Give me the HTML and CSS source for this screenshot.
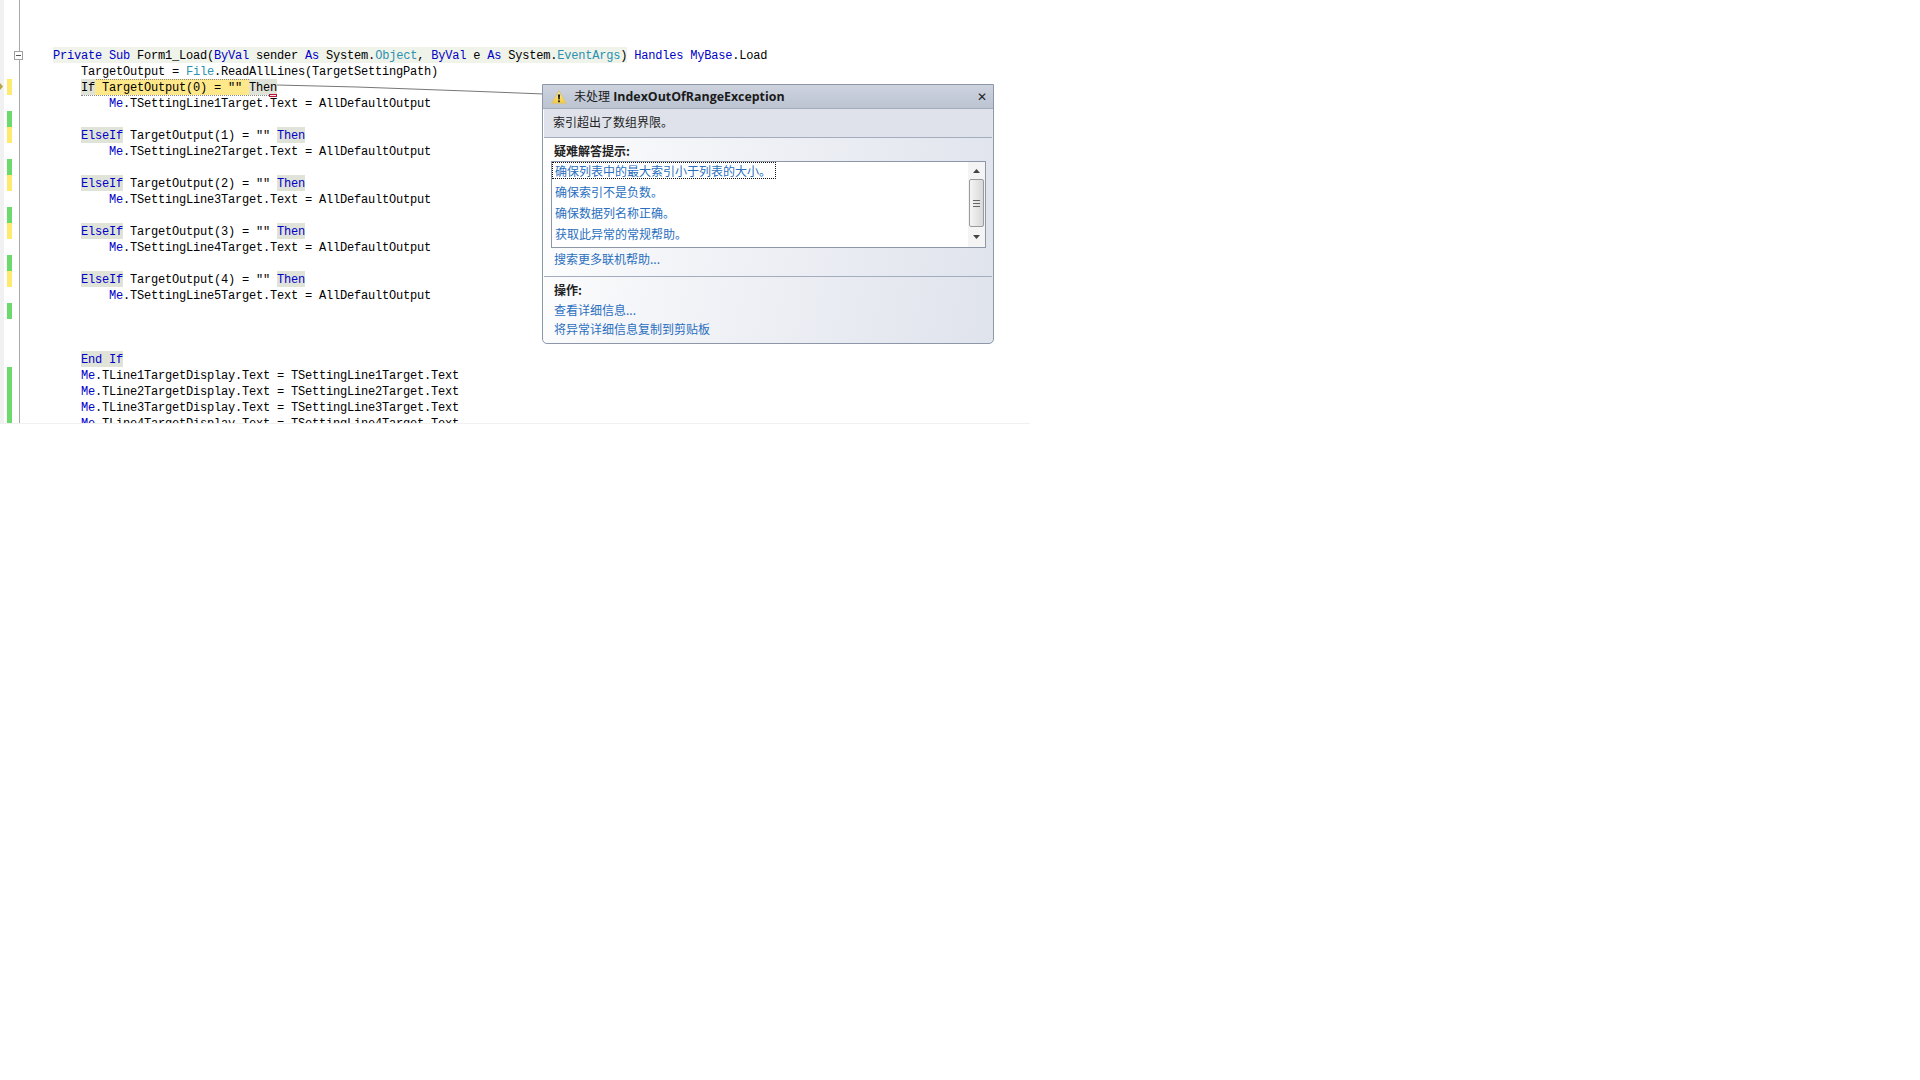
FILE: index.html
```html
<!DOCTYPE html>
<html lang="zh-CN">
<head>
<meta charset="utf-8">
<title>IndexOutOfRangeException</title>
<link rel="stylesheet" href="styles.css">
</head>
<body>
<main class="editor">
  <button class="fold" aria-label="折叠"></button>
  <svg class="exec-arrow" width="3" height="7" viewBox="0 0 3 7"><path d="M0 0 L3 3.5 L0 7 Z" fill="#b5a642"/></svg>
  <svg class="leader" width="300" height="20" viewBox="0 0 300 20"><polyline points="0,1 80,3 190,7 267,10" fill="none" stroke="#777" stroke-width="1"/></svg>
  <div class="line"><i class="mark"></i><code class="code in0"><span class="ref"><b>Private</b> <b>Sub</b> Form1_Load(<b>ByVal</b> sender <b>As</b> System.<em>Object</em>, <b>ByVal</b> e <b>As</b> System.<em>EventArgs</em>)</span> <b>Handles</b> <b>MyBase</b>.Load</code></div>
  <div class="line"><i class="mark"></i><code class="code in1">TargetOutput = <em>File</em>.ReadAllLines(TargetSettingPath)</code></div>
  <div class="line"><i class="mark yellow"></i><code class="code in1 current"><span class="kw-bg">If</span><span class="stmt"> TargetOutput(0) = "" </span><span class="kw-bg">Then<s class="squiggle"></s></span></code></div>
  <div class="line"><i class="mark"></i><code class="code in2"><b>Me</b>.TSettingLine1Target.Text = AllDefaultOutput</code></div>
  <div class="line"><i class="mark green"></i><code class="code"></code></div>
  <div class="line"><i class="mark yellow"></i><code class="code in1"><span class="kw-bg"><b>ElseIf</b></span> TargetOutput(1) = "" <span class="kw-bg"><b>Then</b></span></code></div>
  <div class="line"><i class="mark"></i><code class="code in2"><b>Me</b>.TSettingLine2Target.Text = AllDefaultOutput</code></div>
  <div class="line"><i class="mark green"></i><code class="code"></code></div>
  <div class="line"><i class="mark yellow"></i><code class="code in1"><span class="kw-bg"><b>ElseIf</b></span> TargetOutput(2) = "" <span class="kw-bg"><b>Then</b></span></code></div>
  <div class="line"><i class="mark"></i><code class="code in2"><b>Me</b>.TSettingLine3Target.Text = AllDefaultOutput</code></div>
  <div class="line"><i class="mark green"></i><code class="code"></code></div>
  <div class="line"><i class="mark yellow"></i><code class="code in1"><span class="kw-bg"><b>ElseIf</b></span> TargetOutput(3) = "" <span class="kw-bg"><b>Then</b></span></code></div>
  <div class="line"><i class="mark"></i><code class="code in2"><b>Me</b>.TSettingLine4Target.Text = AllDefaultOutput</code></div>
  <div class="line"><i class="mark green"></i><code class="code"></code></div>
  <div class="line"><i class="mark yellow"></i><code class="code in1"><span class="kw-bg"><b>ElseIf</b></span> TargetOutput(4) = "" <span class="kw-bg"><b>Then</b></span></code></div>
  <div class="line"><i class="mark"></i><code class="code in2"><b>Me</b>.TSettingLine5Target.Text = AllDefaultOutput</code></div>
  <div class="line"><i class="mark green"></i><code class="code"></code></div>
  <div class="line"><i class="mark"></i><code class="code"></code></div>
  <div class="line"><i class="mark"></i><code class="code"></code></div>
  <div class="line"><i class="mark"></i><code class="code in1"><span class="kw-bg"><b>End</b> <b>If</b></span></code></div>
  <div class="line"><i class="mark green"></i><code class="code in1"><b>Me</b>.TLine1TargetDisplay.Text = TSettingLine1Target.Text</code></div>
  <div class="line"><i class="mark green"></i><code class="code in1"><b>Me</b>.TLine2TargetDisplay.Text = TSettingLine2Target.Text</code></div>
  <div class="line"><i class="mark green"></i><code class="code in1"><b>Me</b>.TLine3TargetDisplay.Text = TSettingLine3Target.Text</code></div>
  <div class="line"><i class="mark green"></i><code class="code in1"><b>Me</b>.TLine4TargetDisplay.Text = TSettingLine4Target.Text</code></div>

  <aside class="assistant">
    <header class="a-head">
      <svg class="warn" width="16" height="14" viewBox="0 0 16 14">
        <defs><linearGradient id="wg" x1="0" y1="0" x2="0" y2="1"><stop offset="0" stop-color="#fdf0a0"/><stop offset="1" stop-color="#f5c93a"/></linearGradient></defs>
        <path d="M8 .8 L15.2 13.2 H.8 Z" fill="url(#wg)" stroke="#d8c47a" stroke-width="1" stroke-linejoin="round"/>
        <path d="M6.9 4.5 H9.1 L8.7 9.5 H7.3 Z" fill="#1c1c1c"/><rect x="7.1" y="10.4" width="1.8" height="1.8" fill="#1c1c1c"/>
      </svg>
      <h1 class="a-title"><span class="cjk">未处理</span> IndexOutOfRangeException</h1>
      <span class="close">✕</span>
    </header>
    <p class="a-msg">索引超出了数组界限。</p>
    <section class="a-tips">
      <h2 class="a-label">疑难解答提示:</h2>
      <div class="listbox">
        <ul class="items">
          <li class="focus">确保列表中的最大索引小于列表的大小。</li>
          <li>确保索引不是负数。</li>
          <li>确保数据列名称正确。</li>
          <li>获取此异常的常规帮助。</li>
        </ul>
        <div class="scroll">
          <svg class="arrow" width="7" height="4" viewBox="0 0 7 4"><path d="M3.5 0 L7 4 H0 Z" fill="#444"/></svg>
          <div class="thumb"><span class="grip"></span></div>
          <svg class="arrow down" width="7" height="4" viewBox="0 0 7 4"><path d="M0 0 H7 L3.5 4 Z" fill="#444"/></svg>
        </div>
      </div>
      <a class="link more">搜索更多联机帮助...</a>
    </section>
    <section class="a-actions">
      <h2 class="a-label">操作:</h2>
      <a class="link">查看详细信息...</a>
      <a class="link">将异常详细信息复制到剪贴板</a>
    </section>
  </aside>
</main>
</body>
</html>
```

FILE: styles.css
```css
* { box-sizing: border-box; }
html, body { margin: 0; background: #fff; }
body { height: 1080px; overflow: hidden; }

.editor {
  position: relative;
  width: 1030px;
  height: 424px;
  padding-top: 47px;
  overflow: hidden;
  border-bottom: 1px solid #f0f0f0;
  background:
    linear-gradient(#a8a8a8, #a8a8a8) 19px 0 / 1px 100% no-repeat,
    linear-gradient(#f1f1f1, #f1f1f1) 0 0 / 4px 100% no-repeat,
    #fff;
}

.line { display: flex; height: 16px; }
.mark { flex: none; width: 5px; margin-left: 7px; }
.mark.yellow { background: #ffea70; }
.mark.green { background: #6bd96b; }

.code {
  margin-left: 41px;
  font: 12px/18px "Liberation Mono", monospace;
  letter-spacing: -0.2px;
  color: #000;
  white-space: pre;
  font-style: normal;
}
.code.in1 { margin-left: 69px; }
.code.in2 { margin-left: 97px; }
.code b { font-weight: 400; color: #0000c8; }
.code em { font-style: normal; color: #2b91af; }
.ref { display: inline-block; height: 16px; background: #f0f3ea; vertical-align: top; }
.kw-bg { display: inline-block; position: relative; height: 16px; background: #e0e3d8; vertical-align: top; }
.stmt { display: inline-block; height: 16px; background: #ffe88a; vertical-align: top; }
.current { height: 17px; outline: 1px dotted #8a8a8a; outline-offset: -1px; }
.squiggle {
  position: absolute;
  right: 0;
  bottom: -2px;
  width: 8px;
  height: 3px;
  border: 1px solid #b8143c;
  background: #fbe4e8;
}

.fold {
  position: absolute;
  left: 14px;
  top: 51px;
  width: 9px;
  height: 9px;
  padding: 0;
  border: 1px solid #a0a0a0;
  background: linear-gradient(#555, #555) center / 5px 1px no-repeat, #fff;
}
.exec-arrow { position: absolute; left: 0; top: 83px; }
.leader { position: absolute; left: 277px; top: 84px; }

.assistant {
  position: absolute;
  left: 542px;
  top: 84px;
  width: 452px;
  height: 260px;
  border: 1px solid #8e97a8;
  border-radius: 0 0 5px 5px;
  background: linear-gradient(100deg, #fff 0%, #f5f6f9 25%, #dfe3ec 100%);
  font: 12px/16px "Noto Sans CJK SC", sans-serif;
  color: #222;
}
.a-head {
  display: flex;
  align-items: center;
  height: 24px;
  padding: 0 6px 0 8px;
  background: linear-gradient(#cdd3de, #bcc4d2);
  border-bottom: 1px solid #a4adbd;
}
.a-title {
  flex: 1;
  margin: 0 0 0 7px;
  font: 700 12.4px/16px "Open Sans", "Noto Sans CJK SC", sans-serif;
  color: #1a1a1a;
}
.a-title .cjk { font: 400 12px/16px "Noto Sans CJK SC", sans-serif; }
.close { font: 12px/16px "DejaVu Sans", sans-serif; color: #222; }
.a-msg {
  height: 29px;
  margin: 0 1px;
  padding: 3px 9px 0;
  line-height: 20px;
  background: #dfe2ea;
  border-bottom: 1px solid #a4adbd;
}
.a-label { margin: 0; font: 700 12px/16px "Noto Sans CJK SC", sans-serif; color: #222; }
.a-tips {
  display: flex;
  flex-direction: column;
  align-items: flex-start;
  height: 139px;
  padding: 5px 6px 0 10px;
  margin-inline: 1px;
  border-bottom: 1px solid #a4adbd;
}
.listbox {
  display: flex;
  align-self: stretch;
  height: 87px;
  margin: 2px 0 0 -3px;
  border: 1px solid #8e97a8;
  background: #fff;
}
.items { flex: 1; margin: 0; padding: 0; list-style: none; }
.items li { height: 17px; margin: 0 0 4px; padding: 0 3px; line-height: 17px; color: #2a6fc0; width: max-content; }
.items li.focus { width: 224px; border: 1px dotted #111; padding: 0 2px; line-height: 15px; }
.scroll {
  flex: none;
  display: flex;
  flex-direction: column;
  align-items: center;
  width: 17px;
  padding-top: 7px;
  background: #f4f4f4;
}
.thumb {
  display: flex;
  align-items: center;
  justify-content: center;
  flex: none;
  width: 15px;
  height: 48px;
  margin-top: 6px;
  border: 1px solid #9a9a9a;
  border-radius: 2px;
  background: linear-gradient(90deg, #f4f4f4, #d8d8d8);
}
.arrow { flex: none; }
.arrow.down { margin-top: 8px; }
.grip { width: 7px; height: 7px; background: repeating-linear-gradient(#666 0 1px, transparent 1px 3px); }
.link { display: block; color: #2a6fc0; line-height: 19px; }
.more { margin-top: 1px; }
.a-actions {
  display: flex;
  flex-direction: column;
  padding: 5px 11px 0;
}
.a-actions .a-label { margin-bottom: 2px; }
```
